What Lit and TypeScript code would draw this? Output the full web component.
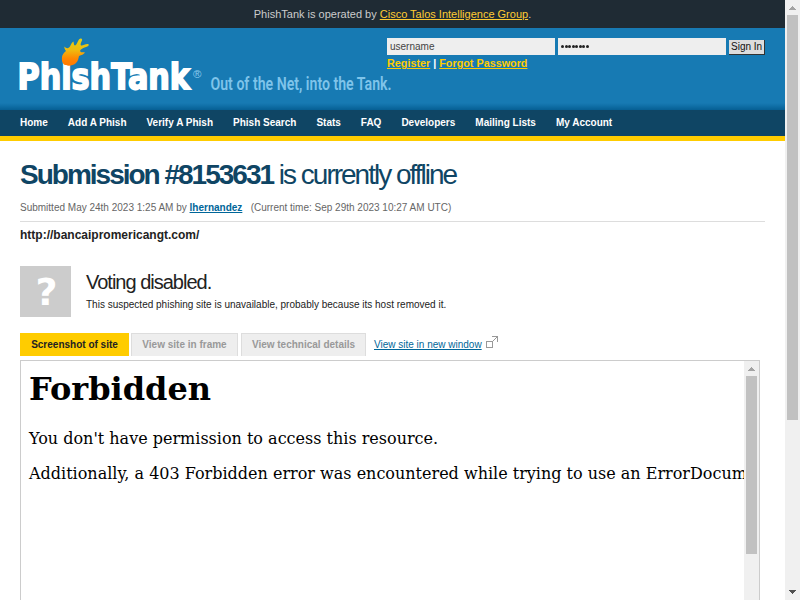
import { LitElement, html, css } from "lit";
import { customElement, property } from "lit/decorators.js";

@customElement("scroll-track")
class ScrollTrack extends LitElement {
  @property({ type: Number }) thumb = 100;
  @property({ type: Boolean }) down = false;

  static styles = css`
    :host { display: flex; flex-direction: column; width: 15px; background: #f0f0f0; flex: none; }
    svg { display: block; flex: none; }
    .thumb { width: 11px; margin-left: 2px; background: #c1c1c1; flex: none; }
    .fill { flex: 1; }
  `;

  render() {
    return html`
      <svg width="15" height="15" shape-rendering="crispEdges"><path d="M7 6h1v1h1v1h1v1h1v1H4v-1h1v-1h1v-1h1z" fill="#a3a3a3" /></svg>
      <div class="thumb" style="height:${this.thumb}px"></div>
      <div class="fill"></div>
      ${this.down
        ? html`<svg width="15" height="15" shape-rendering="crispEdges"><path d="M4 5h7v1h-1v1h-1v1h-1v1h-1v-1h-1v-1h-1v-1h-1z" fill="#505050" /></svg>`
        : ""}
    `;
  }
}

@customElement("site-logo")
class SiteLogo extends LitElement {
  static styles = css`
    :host { display: block; width: 385px; height: 82px; }
    svg { display: block; }
    .name { font: bold 35.500px "DejaVu Sans", sans-serif; fill: #fff; stroke: #fff; stroke-width: 1.8px; stroke-linejoin: miter; }
    .reg { font: 11.500px "Liberation Sans", sans-serif; fill: #8ccbee; }
    .tag { font: 600 18px Roboto, "Liberation Sans", sans-serif; fill: #7fc4ea; }
  `;

  render() {
    return html`
      <svg width="385" height="82" viewBox="0 28 385 82" overflow="visible">
        <defs>
          <linearGradient id="flame" x1="0" y1="0" x2="0" y2="1">
            <stop offset="0" stop-color="#e5cf14" />
            <stop offset="0.42" stop-color="#eebb10" />
            <stop offset="0.75" stop-color="#ff8500" />
            <stop offset="1" stop-color="#ff7900" />
          </linearGradient>
        </defs>
        <text class="name" x="17.500" y="89.200" textLength="172.500" lengthAdjust="spacingAndGlyphs">PhishTank</text>
        <path fill="url(#flame)" d="M62 57C62.300 54.500 64 52.500 66 51C65 49.500 64 48 64.500 46.500C66 48.500 68 48.500 69 47.500C71 46 70.500 43.500 73.500 41.500C74 43.500 73.500 45 75 45.500C77.500 44.500 77.500 40 80 38.800C81.500 38 82.500 39 82 40.500C81 42.500 80 44.500 81 45.500C83 46 85.500 43.500 88.500 44.200C89.500 45 88 46.500 86 47C83 48 80.500 49 80 51C81 53 83 52 85 52.500C83.500 54.500 81.500 55 79 56C78.500 58.500 78 61 76 63C73 66 67 66.500 64 64.500C62 62.500 61.700 60 62 57Z" />
        <text class="reg" x="193" y="77.500">®</text>
        <text class="tag" x="210.500" y="90" textLength="181" lengthAdjust="spacingAndGlyphs">Out of the Net, into the Tank.</text>
      </svg>
    `;
  }
}

@customElement("app-root")
class AppRoot extends LitElement {
  static styles = css`
    :host {
      display: flex; width: 800px; height: 600px; overflow: hidden; background: #fff;
      font: 10px/14px "Liberation Sans", sans-serif; color: #222;
    }
    * { box-sizing: border-box; }
    .page { width: 785px; height: 600px; overflow: hidden; }
    .operator { height: 28px; background: #1f2b34; color: #ccc; font-size: 11px; line-height: 28px; text-align: center; }
    .operator a { color: #fc3; }
    .header {
      height: 82px; display: flex;
      background: linear-gradient(#177ab3 0 75px, #1273ab 77px, #065f94 82px);
    }
    .login { padding: 10px 0 0 2px; }
    .fields { display: flex; align-items: flex-start; height: 17px; }
    .field { width: 168px; height: 17px; margin-right: 3px; padding-left: 3px; background: #eee; color: #444; line-height: 17px; }
    .dots { display: flex; align-items: center; gap: 0.5px; color: #222; }
    .dot { width: 3px; height: 3px; border-radius: 50%; background: #222; }
    .button {
      width: 36px; height: 15px; margin-top: 2px; padding-left: 2px; background: #ddd; color: #111;
      border-right: 1px solid #333; border-bottom: 1px solid #333; line-height: 13px; white-space: nowrap;
    }
    .links { color: #fff; font-size: 10.8px; line-height: 16px; font-weight: bold; }
    .links a { color: #fc0; }
    .nav {
      height: 31px; padding: 0 20px; display: flex; gap: 20px; background: #0f4564; border-bottom: 5px solid #fc0;
      color: #fff; font-weight: bold; line-height: 26px; white-space: nowrap;
    }
    .content { padding: 0 20px; }
    h1 {
      margin: 0; padding-top: 16px; height: 60px; color: #0f4564; font-size: 28px; line-height: 36px;
      font-weight: normal; letter-spacing: -2px; white-space: nowrap;
    }
    .submitted { height: 21px; border-bottom: 1px solid #ddd; color: #666; }
    .submitted a { color: #069; font-weight: bold; }
    .time { margin-left: 5.5px; }
    .url { height: 44px; padding-top: 6px; font-size: 12px; font-weight: bold; }
    .vote { display: flex; height: 67px; }
    .mark {
      width: 51px; height: 51px; margin-right: 15px; background: #ccc; color: #fff; text-align: center;
      font: bold 38px/52px "DejaVu Sans", sans-serif; padding-left: 2px;
    }
    h2 { margin: 0; padding-top: 3px; font-size: 20px; line-height: 26px; font-weight: normal; letter-spacing: -1px; }
    .vote p { margin: 0; padding-top: 3px; }
    .tabs { display: flex; height: 27px; align-items: flex-start; }
    .tab {
      height: 23px; margin-right: 3px; background: #eee; border: 1px solid #ddd; border-bottom: 0;
      color: #999; font-weight: bold; line-height: 22px; text-align: center;
    }
    .tab.on { background: #fc0; border-color: #fc0; color: #222; margin-right: 2px; }
    .new { display: flex; margin-left: 5px; color: #069; }
    .new a { line-height: 23px; }
    .new svg { margin: 3px 0 0 4px; }
    .frame { display: flex; width: 740px; height: 400px; border: 1px solid #ccc; }
    .shot { width: 723px; padding-left: 8px; overflow: hidden; white-space: nowrap; color: #000; font: 16px/19px "DejaVu Serif", serif; }
    .shot h3 { margin: 0; padding-top: 9px; font-size: 32px; line-height: 38px; height: 68px; }
    .shot p { margin: 0; height: 35px; }
  `;

  render() {
    const nav = ["Home", "Add A Phish", "Verify A Phish", "Phish Search", "Stats", "FAQ", "Developers", "Mailing Lists", "My Account"];
    const tabs = [["Screenshot of site", 109], ["View site in frame", 107], ["View technical details", 125]] as const;
    return html`
      <div class="page">
        <div class="operator">PhishTank is operated by <a><u>Cisco Talos Intelligence Group</u></a>.</div>
        <div class="header">
          <site-logo></site-logo>
          <div class="login">
            <div class="fields">
              <div class="field">username</div>
              <div class="field dots">${Array.from({ length: 8 }, () => html`<span class="dot"></span>`)}</div>
              <div class="button">Sign In</div>
            </div>
            <div class="links"><a><u>Register</u></a> | <a><u>Forgot Password</u></a></div>
          </div>
        </div>
        <div class="nav">${nav.map((n) => html`<span>${n}</span>`)}</div>
        <div class="content">
          <h1><b>Submission #8153631</b> is currently offline</h1>
          <div class="submitted">Submitted May 24th 2023 1:25 AM by <a><u>lhernandez</u></a> <span class="time">(Current time: Sep 29th 2023 10:27 AM UTC)</span></div>
          <div class="url">http://bancaipromericangt.com/</div>
          <div class="vote">
            <div class="mark">?</div>
            <div>
              <h2>Voting disabled.</h2>
              <p>This suspected phishing site is unavailable, probably because its host removed it.</p>
            </div>
          </div>
          <div class="tabs">
            ${tabs.map(([t, w], i) => html`<div class="tab ${i === 0 ? "on" : ""}" style="width:${w}px">${t}</div>`)}
            <div class="new">
              <a><u>View site in new window</u></a>
              <svg width="12" height="12" fill="none" stroke="#999" shape-rendering="crispEdges">
                <path d="M0.500 5.500h6v6h-6zM6 0.500h5.500V6" />
                <path d="M6 6L11 1" stroke-dasharray="1 0.400" />
              </svg>
            </div>
          </div>
          <div class="frame">
            <div class="shot">
              <h3>Forbidden</h3>
              <p>You don't have permission to access this resource.</p>
              <p>Additionally, a 403 Forbidden error was encountered while trying to use an ErrorDocument</p>
            </div>
            <scroll-track .thumb=${178}></scroll-track>
          </div>
        </div>
      </div>
      <scroll-track .thumb=${405} down></scroll-track>
    `;
  }
}
